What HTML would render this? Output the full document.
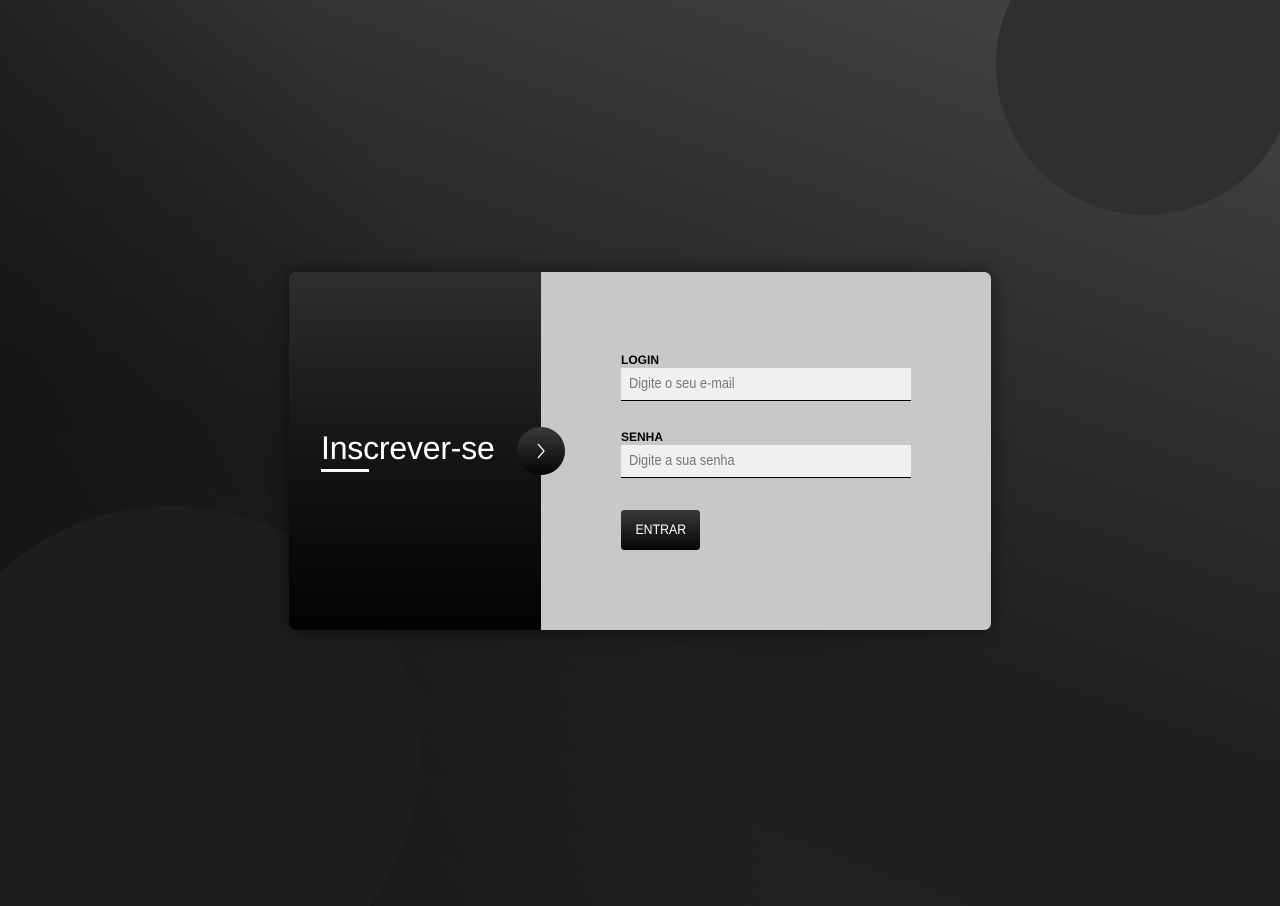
<!DOCTYPE html>
<html><head><style>
html,body{margin:0;padding:0;width:1280px;height:906px;overflow:hidden}
html{background:#222}
body{font-family:"Liberation Sans",sans-serif}
.wrap{position:relative;width:1280px;height:906px;overflow:hidden;background:linear-gradient(200deg,#474747 0%,#2c2c2c 35%,#1e1e1e 60%,#252525 100%)}
.bg1{position:absolute;left:0;top:0;width:1280px;height:906px;background:linear-gradient(60deg,#111 0%,rgba(0,0,0,0) 45%)}
.c1{position:absolute;left:996px;top:-85px;width:300px;height:300px;border-radius:50%;background:#2f2f2f}
.c2{position:absolute;left:-80px;top:506px;width:500px;height:500px;border-radius:50%;background:#1d1d1d}
.card{position:absolute;left:289px;top:272px;width:702px;height:358px;border-radius:7px;box-shadow:0 0 18px rgba(0,0,0,.55)}
.left{position:absolute;left:0;top:0;width:252px;height:358px;border-radius:7px 0 0 7px;background:linear-gradient(180deg,#2e2e2e,#151515 50%,#020202)}
.right{position:absolute;left:252px;top:0;width:450px;height:358px;border-radius:0 7px 7px 0;background:#c8c8c8}
.title{position:absolute;left:32px;top:158px;color:#fff;font-size:32px;letter-spacing:-0.2px}
.ul{position:absolute;left:32px;top:197px;width:48px;height:3px;background:#fff}
.btnc{position:absolute;left:228px;top:155px;width:48px;height:48px;border-radius:50%;background:linear-gradient(180deg,#3a3a3a,#050505)}
.lbl{position:absolute;left:332px;font-size:12px;font-weight:bold;color:#000}
.inp{position:absolute;left:332px;width:290px;height:33px;background:#f0f0f0;border-bottom:1px solid #000;box-sizing:border-box;font-size:15px;color:#777;padding:7px 0 0 8px}
.inp span{display:inline-block;transform:scaleX(.85);transform-origin:left}
.enter{position:absolute;left:332px;top:238px;width:79px;height:40px;border-radius:3px;background:linear-gradient(180deg,#3a3a3a,#050505);color:#fff;font-size:14px;text-align:center;line-height:39px}
.enter span{display:inline-block;transform:scaleX(.88)}
</style></head><body><div class="wrap">
<div class="bg1"></div>
<div class="c1"></div><div class="c2"></div>
<div class="card">
<div class="left"></div>
<div class="right"></div>
<div class="title">Inscrever-se</div>
<div class="ul"></div>
<div class="btnc"><svg width="48" height="48" viewBox="0 0 48 48"><path d="M21 17 L27 24 L21 31" stroke="#fff" stroke-width="1.3" fill="none"/></svg></div>
<div class="lbl" style="top:81px">LOGIN</div>
<div class="inp" style="top:96px"><span>Digite o seu e-mail</span></div>
<div class="lbl" style="top:158px">SENHA</div>
<div class="inp" style="top:173px"><span>Digite a sua senha</span></div>
<div class="enter"><span>ENTRAR</span></div>
</div>
</div></body></html>
